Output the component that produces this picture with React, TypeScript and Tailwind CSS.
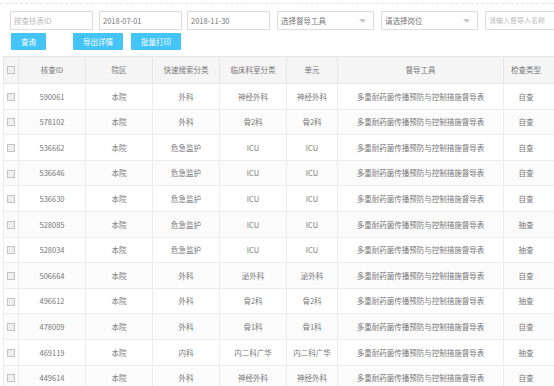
import React from "react";

const rows: [string, string, string, string, string, string][] = [
  ["590061", "本院", "外科", "神经外科", "神经外科", "自查"],
  ["578102", "本院", "外科", "骨2科", "骨2科", "自查"],
  ["536662", "本院", "危急监护", "ICU", "ICU", "自查"],
  ["536646", "本院", "危急监护", "ICU", "ICU", "自查"],
  ["536630", "本院", "危急监护", "ICU", "ICU", "自查"],
  ["528085", "本院", "危急监护", "ICU", "ICU", "抽查"],
  ["528034", "本院", "危急监护", "ICU", "ICU", "抽查"],
  ["506664", "本院", "外科", "泌外科", "泌外科", "自查"],
  ["496612", "本院", "外科", "骨2科", "骨2科", "抽查"],
  ["478009", "本院", "外科", "骨1科", "骨1科", "自查"],
  ["469119", "本院", "内科", "内二科广华", "内二科广华", "抽查"],
  ["449614", "本院", "外科", "神经外科", "神经外科", "自查"],
];

const font = { fontFamily: '"Noto Sans CJK SC", "Noto Sans", sans-serif' };

function Box() {
  return <span className="inline-block w-[8px] h-[8px] border border-[#c4c4c4] bg-[#efefef] align-middle" />;
}

function Caret() {
  return (
    <svg width="7" height="4" viewBox="0 0 7 4" className="shrink-0">
      <path d="M0 0h7L3.5 4z" fill="#c8c8c8" />
    </svg>
  );
}

export default function App() {
  const tool = "多重耐药菌传播预防与控制措施督导表";
  return (
    <div className="w-[554px] h-[386px] overflow-hidden bg-white text-[7.5px] text-[#777]" style={font}>
      <div className="h-[4px] border-b border-dashed border-[#e6e6e6]" />
      <div className="flex items-center mt-[7px] pl-[10px] h-[19px]">
        <div className="w-[83px] h-[19px] border border-[#dcdcdc] flex items-center px-[3px] text-[#bbb] shrink-0">按查核表ID</div>
        <div className="ml-[6px] w-[83px] h-[19px] border border-[#dcdcdc] flex items-center px-[3px] text-[#777] shrink-0">2018-07-01</div>
        <div className="ml-[5px] w-[83px] h-[19px] border border-[#dcdcdc] flex items-center px-[3px] text-[#777] shrink-0">2018-11-30</div>
        <div className="ml-[7px] w-[97px] h-[19px] border border-[#dcdcdc] flex items-center justify-between pl-[3px] pr-[7px] text-[#777] shrink-0">
          <span>选择督导工具</span>
          <Caret />
        </div>
        <div className="ml-[7px] w-[97px] h-[19px] border border-[#dcdcdc] flex items-center justify-between pl-[3px] pr-[7px] text-[#777] shrink-0">
          <span>请选择岗位</span>
          <Caret />
        </div>
        <div className="ml-[7px] w-[90px] h-[19px] border border-[#dcdcdc] flex items-center px-[3px] text-[#bbb] shrink-0 text-[7px]">请输入督导人名称</div>
      </div>
      <div className="flex items-center mt-[3px] pl-[11px] h-[17px]">
        <div className="w-[35px] h-[17px] bg-[#44c4f7] text-white flex items-center justify-center rounded-[1px]">查询</div>
        <div className="ml-[27px] w-[50px] h-[17px] bg-[#44c4f7] text-white flex items-center justify-center rounded-[1px]">导出详情</div>
        <div className="ml-[8px] w-[50px] h-[17px] bg-[#44c4f7] text-white flex items-center justify-center rounded-[1px]">批量打印</div>
      </div>
      <div className="ml-[3px] mt-[6px]">
        <table className="table-fixed border-collapse w-[551px]">
          <colgroup>
            <col className="w-[15px]" />
            <col className="w-[67px]" />
            <col className="w-[67px]" />
            <col className="w-[67px]" />
            <col className="w-[67px]" />
            <col className="w-[51px]" />
            <col className="w-[166px]" />
            <col className="w-[51px]" />
          </colgroup>
          <thead>
            <tr className="h-[27px] bg-[#f5f5f5]">
              <th className="border border-[#e6e6e6] font-normal text-center leading-none"><Box /></th>
              <th className="border border-[#e6e6e6] font-normal">核查ID</th>
              <th className="border border-[#e6e6e6] font-normal">院区</th>
              <th className="border border-[#e6e6e6] font-normal">快速搜索分类</th>
              <th className="border border-[#e6e6e6] font-normal">临床科室分类</th>
              <th className="border border-[#e6e6e6] font-normal">单元</th>
              <th className="border border-[#e6e6e6] font-normal">督导工具</th>
              <th className="border border-[#e6e6e6] font-normal pr-[6px]">检查类型</th>
            </tr>
          </thead>
          <tbody>
            {rows.map((r, i) => (
              <tr key={r[0]} className={i % 2 === 1 ? "h-[25.6px] bg-[#fbfbfb]" : "h-[25.6px] bg-white"}>
                <td className="border border-[#ececec] text-center leading-none"><Box /></td>
                <td className="border border-[#ececec] text-center">{r[0]}</td>
                <td className="border border-[#ececec] text-center">{r[1]}</td>
                <td className="border border-[#ececec] text-center">{r[2]}</td>
                <td className="border border-[#ececec] text-center">{r[3]}</td>
                <td className="border border-[#ececec] text-center">{r[4]}</td>
                <td className="border border-[#ececec] text-center">{tool}</td>
                <td className="border border-[#ececec] text-center pr-[6px]">{r[5]}</td>
              </tr>
            ))}
          </tbody>
        </table>
      </div>
    </div>
  );
}
